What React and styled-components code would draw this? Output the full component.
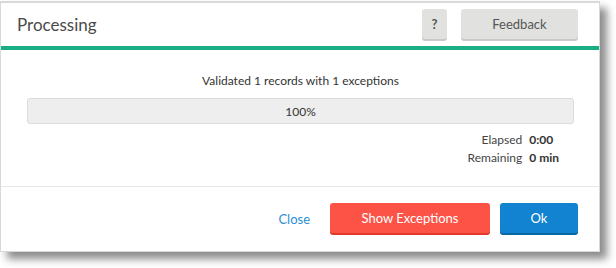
import styled, { createGlobalStyle } from 'styled-components';

const GlobalStyle = createGlobalStyle`
  body {
    margin: 0;
    background: #fff;
    font-family: Lato, "Open Sans", sans-serif;
  }
`;

const Page = styled.div`
  padding-top: 1px;
  width: 616px;
  height: 267px;
`;

const Dialog = styled.div`
  width: 598px;
  border: 1px solid #d9d9d9;
  border-top-width: 2px;
  background: #fff;
  box-shadow: 7px 7px 8px rgba(0, 0, 0, 0.45);
`;

const Header = styled.div`
  display: flex;
  align-items: center;
  height: 43px;
  padding: 0 21px 0 16px;
  border-bottom: 4px solid #1aae84;
`;

const Title = styled.h1`
  flex: 1;
  margin: 0;
  font-size: 17px;
  font-weight: 400;
  color: #4a4a4a;
`;

const GreyButton = styled.button`
  width: ${p => p.$width}px;
  height: 30px;
  margin-left: ${p => p.$gap || 0}px;
  border: none;
  border-radius: 3px;
  background: #e1e2df;
  box-shadow: 0 2px 0 #c9cac7;
  font-family: inherit;
  font-size: 13px;
  font-weight: ${p => (p.$bold ? 700 : 400)};
  color: #555;
  margin-bottom: 2px;
`;

const Body = styled.div`
  padding: 23px 25px 19px 26px;
  border-bottom: 1px solid #e6e6e6;
`;

const Message = styled.div`
  text-align: center;
  font-size: 12px;
  color: #333;
  height: 15px;
  line-height: 15px;
`;

const Progress = styled.div`
  margin-top: 10px;
  height: 24px;
  border: 1px solid #dcdcdc;
  border-radius: 3px;
  background: #eeeeee;
  display: flex;
  align-items: center;
  justify-content: center;
  font-size: 12px;
  color: #333;
`;

const Stats = styled.div`
  display: grid;
  grid-template-columns: auto auto;
  justify-content: end;
  column-gap: 7px;
  margin-top: 7px;
  padding-right: 15px;
  font-size: 12px;
  line-height: 18px;
  color: #444;
`;

const Label = styled.span`
  text-align: right;
`;

const Value = styled.span`
  font-weight: 700;
  color: #333;
`;

const Footer = styled.div`
  display: flex;
  justify-content: flex-end;
  align-items: center;
  gap: 10px;
  padding: 16px 21px 16px 0;
`;

const LinkButton = styled.button`
  border: none;
  background: none;
  font-family: inherit;
  font-size: 13px;
  color: #2b8fd6;
  padding: 0;
  margin-right: 10px;
`;

const ActionButton = styled.button`
  width: ${p => p.$width}px;
  height: 30px;
  border: none;
  border-radius: 3px;
  background: ${p => p.$bg};
  box-shadow: 0 2px 0 ${p => p.$shade};
  font-family: inherit;
  font-size: 13px;
  color: #fff;
  margin-bottom: 2px;
`;

const App = () => {
  return (
    <Page>
      <GlobalStyle />
      <Dialog>
        <Header>
          <Title>Processing</Title>
          <GreyButton $width={25} $bold>?</GreyButton>
          <GreyButton $width={117} $gap={14}>Feedback</GreyButton>
        </Header>
        <Body>
          <Message>Validated 1 records with 1 exceptions</Message>
          <Progress>100%</Progress>
          <Stats>
            <Label>Elapsed</Label>
            <Value>0:00</Value>
            <Label>Remaining</Label>
            <Value>0 min</Value>
          </Stats>
        </Body>
        <Footer>
          <LinkButton>Close</LinkButton>
          <ActionButton $width={160} $bg="#fd5346" $shade="#e2392c">Show Exceptions</ActionButton>
          <ActionButton $width={78} $bg="#1183d0" $shade="#0a67a6">Ok</ActionButton>
        </Footer>
      </Dialog>
    </Page>
  );
};

export default App;
